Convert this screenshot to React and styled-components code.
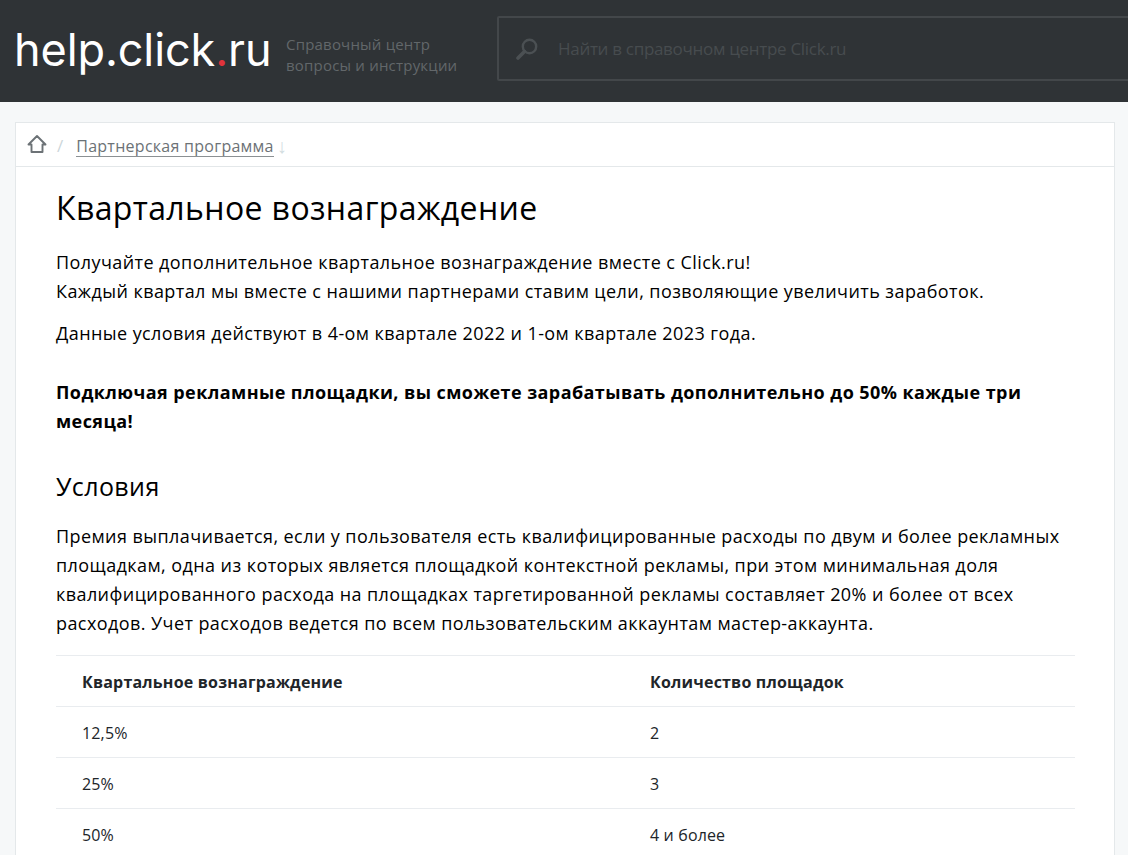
import React from "react";
import styled, { createGlobalStyle } from "styled-components";

const GlobalStyle = createGlobalStyle`
  html, body {
    margin: 0;
    padding: 0;
    background: #f6f8f9;
    font-family: "Open Sans", "Noto Sans", sans-serif;
    color: #000;
  }
  * { box-sizing: border-box; }
`;

const Page = styled.div`
  height: 100vh;
  overflow: hidden;
`;

const Header = styled.header`
  height: 102px;
  background: #2f3336;
  display: flex;
  align-items: center;
  overflow: hidden;
  padding-left: 14px;
`;

const Logo = styled.div`
  flex: none;
  font-family: "Inter", sans-serif;
  font-size: 45px;
  font-weight: 400;
  letter-spacing: -0.1px;
  color: #fff;
  line-height: 1;
  width: 272px;
  margin-bottom: 4px;
  white-space: nowrap;
  span { color: #e1333c; }
`;

const Tagline = styled.div`
  flex: none;
  width: 211px;
  font-size: 15px;
  line-height: 21px;
  letter-spacing: 0.2px;
  white-space: nowrap;
  color: #62676a;
  margin-bottom: -7px;
`;

const Search = styled.div`
  flex: none;
  width: 700px;
  height: 65px;
  margin-bottom: 5px;
  border: 2px solid #43474a;
  border-radius: 2px;
  display: flex;
  align-items: center;
  padding-left: 17px;
  gap: 20px;
  color: #474c4f;
  font-size: 17px;
  letter-spacing: -0.3px;
  svg { flex: none; }
`;

const Card = styled.main`
  margin: 20px 13px 0 15px;
  background: #fff;
  border: 1px solid #e4e8ea;
`;

const Crumbs = styled.nav`
  height: 44px;
  border-bottom: 1px solid #e4e8ea;
  display: flex;
  align-items: center;
  padding-left: 11px;
  svg { margin-top: -2px; }
`;

const Slash = styled.span`
  color: #ccd6da;
  font-size: 17px;
  margin: 2px 13px 0 10px;
`;

const CrumbLink = styled.a`
  color: #6c7276;
  font-size: 16px;
  letter-spacing: 0.27px;
  line-height: 19px;
  margin-top: 4px;
  border-bottom: 1px solid #8b9093;
`;

const Arrow = styled.span`
  color: #d3dde1;
  font-size: 20px;
  line-height: 1;
  margin: 2px 0 0 3px;
`;

const Content = styled.article`
  padding: 0 39px 0 40px;
`;

const Title = styled.h1`
  font-size: 32px;
  font-weight: 400;
  letter-spacing: 0.38px;
  line-height: 44px;
  margin: 19px 0 18px;
`;

const Para = styled.p`
  font-size: 18px;
  letter-spacing: 0.42px;
  line-height: 28.8px;
  margin: 0 0 13.500px;
`;

const Lead = styled(Para)`
  font-weight: 700;
  margin: 30px 0 0;
`;

const Subtitle = styled.h2`
  font-size: 25px;
  font-weight: 400;
  letter-spacing: 0.4px;
  line-height: 34px;
  margin: 34px 0 19px;
`;

const Table = styled.table`
  width: 100%;
  border-collapse: collapse;
  font-size: 16px;
  letter-spacing: 0.15px;
  color: #212529;
  margin-top: 17px;
  table-layout: fixed;

  th, td {
    height: 51px;
    padding: 2px 26px 0;
    text-align: left;
    border-top: 1px solid #e9ecef;
  }
  th { font-weight: 700; padding-top: 3px; letter-spacing: 0.2px; }
  th:first-child, td:first-child { width: 568px; }
`;

const rows = [
  ["12,5%", "2"],
  ["25%", "3"],
  ["50%", "4 и более"],
];

const HomeIcon = () => (
  <svg width="20" height="20" viewBox="0 0 20 20" fill="none" stroke="#6c7276" strokeWidth="1.9">
    <path d="M1.500 10.500 10 2l8.500 8.500h-3v7.500h-11v-7.500z" strokeLinejoin="round" />
  </svg>
);

const SearchIcon = () => (
  <svg width="22" height="22" viewBox="0 0 22 22" fill="none" stroke="#4b5053">
    <circle cx="13.500" cy="8.500" r="6.700" strokeWidth="2.400" />
    <path d="M8.500 13.500 2 20" strokeWidth="3.600" strokeLinecap="round" />
  </svg>
);

export default function App() {
  return (
    <Page>
      <GlobalStyle />
      <Header>
        <Logo>
          help.click<span>.</span>ru
        </Logo>
        <Tagline>
          Справочный центр
          <br />
          вопросы и инструкции
        </Tagline>
        <Search>
          <SearchIcon />
          Найти в справочном центре Click.ru
        </Search>
      </Header>
      <Card>
        <Crumbs>
          <HomeIcon />
          <Slash>/</Slash>
          <CrumbLink>Партнерская программа</CrumbLink>
          <Arrow>↓</Arrow>
        </Crumbs>
        <Content>
          <Title>Квартальное вознаграждение</Title>
          <Para>
            Получайте дополнительное квартальное вознаграждение вместе с Click.ru!
            <br />
            Каждый квартал мы вместе с нашими партнерами ставим цели, позволяющие увеличить заработок.
          </Para>
          <Para>Данные условия действуют в 4-ом квартале 2022 и 1-ом квартале 2023 года.</Para>
          <Lead>
            Подключая рекламные площадки, вы сможете зарабатывать дополнительно до 50% каждые три месяца!
          </Lead>
          <Subtitle>Условия</Subtitle>
          <Para>
            Премия выплачивается, если у пользователя есть квалифицированные расходы по двум и более рекламных
            площадкам, одна из которых является площадкой контекстной рекламы, при этом минимальная доля
            квалифицированного расхода на площадках таргетированной рекламы составляет 20% и более от всех
            расходов. Учет расходов ведется по всем пользовательским аккаунтам мастер-аккаунта.
          </Para>
          <Table>
            <thead>
              <tr>
                <th>Квартальное вознаграждение</th>
                <th>Количество площадок</th>
              </tr>
            </thead>
            <tbody>
              {rows.map((r) => (
                <tr key={r[0]}>
                  <td>{r[0]}</td>
                  <td>{r[1]}</td>
                </tr>
              ))}
            </tbody>
          </Table>
        </Content>
      </Card>
    </Page>
  );
}
